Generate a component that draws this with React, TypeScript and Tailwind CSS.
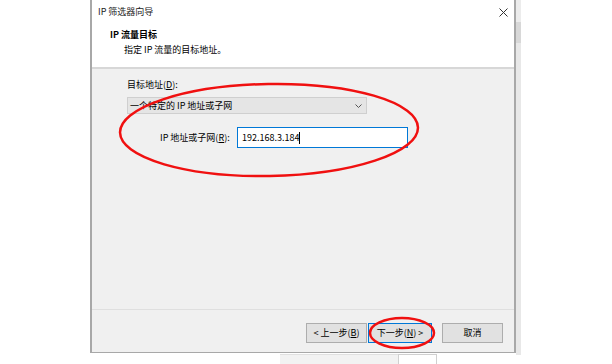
const font = "font-['Microsoft_YaHei','Noto_Sans_CJK_SC','Noto_Sans',sans-serif]";

function Button({ children, primary }: { children: React.ReactNode; primary?: boolean }) {
  return (
    <div
      className={`h-[20px] flex items-center justify-center bg-[#e1e1e1] text-[9px] text-black border ${
        primary ? "border-[#0078d7] w-[64px]" : "border-[#adadad] w-[61px]"
      }`}
    >
      {children}
    </div>
  );
}

export default function App() {
  return (
    <div className={`relative w-[612px] h-[364px] bg-white overflow-hidden flex ${font}`}>
      <div className="w-[90px] shrink-0" />

      <div className="flex flex-col">
        {/* dialog */}
        <div className="w-[426px] h-[354px] flex flex-col border-l-2 border-r-2 border-b border-[#a8a8a8]">
          {/* header */}
          <div className="h-[67px] bg-white pl-[6px] pt-[5px]">
            <div className="h-[14px] flex items-center justify-between pr-[6px]">
              <span className="text-[9px] text-[#222]">IP 筛选器向导</span>
              <svg width="9" height="9" viewBox="0 0 9 9">
                <path d="M0.5 0.5 L8.5 8.5 M8.5 0.5 L0.5 8.5" stroke="#333" strokeWidth="1" />
              </svg>
            </div>
            <div className="mt-[10px] pl-[12px] text-[9px] leading-[12px] font-bold text-black">IP 流量目标</div>
            <div className="mt-[3px] pl-[26px] text-[9px] leading-[12px] text-black">指定 IP 流量的目标地址。</div>
          </div>
          <div className="h-[2px] bg-[#d7d7d7]" />

          {/* body */}
          <div className="flex-1 bg-[#f0f0f0] pl-[35px] pt-[10px]">
            <div className="text-[9px] leading-[12px] text-black">
              目标地址(<u>D</u>):
            </div>
            <div className="mt-[6px] w-[240px] h-[17px] bg-[#e5e5e5] border border-[#cfcfcf] flex items-center justify-between pl-[2px] pr-[4px]">
              <span className="text-[9px] text-black">一个特定的 IP 地址或子网</span>
              <svg width="7" height="4" viewBox="0 0 7 4">
                <path d="M0.5 0.5 L3.5 3.5 L6.5 0.5" stroke="#555" strokeWidth="1" fill="none" />
              </svg>
            </div>
            <div className="mt-[13px] flex items-center">
              <div className="w-[110px] pl-[33px] text-[9px] text-black">
                IP 地址或子网(<u>R</u>):
              </div>
              <div className="w-[171px] h-[21px] bg-white border border-[#0078d7] flex items-center pl-[4px]">
                <span className="text-[9px] text-black">192.168.3.184</span>
                <span className="w-px h-[12px] bg-black" />
              </div>
            </div>
          </div>

          {/* footer */}
          <div className="h-px bg-[#dfdfdf]" />
          <div className="h-[42px] bg-[#f0f0f0] flex justify-end items-start pt-[13px] pr-[11px]">
            <Button>
              &lt; 上一步(<u>B</u>)
            </Button>
            <div className="w-px" />
            <Button primary>
              下一步(<u>N</u>) &gt;
            </Button>
            <div className="w-[10px]" />
            <Button>取消</Button>
          </div>
        </div>
        {/* background window peeking below */}
        <div className="flex h-[10px] mt-px">
          <div className="w-[190px]" />
          <div className="w-[118px] bg-[#f2f2f2] border-t border-[#e0e0e0]" />
          <div className="w-[39px] border-x border-t border-[#d0d0d0] bg-white" />
        </div>
      </div>

      {/* shadow / background on the right */}
      <div className="w-[5px] flex flex-col">
        <div className="h-[22px] bg-[#ececec]" />
        <div className="h-[21px] bg-[#d8d8d8]" />
        <div className="h-[312px] bg-[#e8e8e8]" />
      </div>

      {/* red hand-drawn marks over the dialog */}
      <svg className="absolute inset-0 pointer-events-none" width="612" height="364" viewBox="0 0 612 364">
        <ellipse cx="269" cy="130" rx="149" ry="46" transform="rotate(-1 269 130)" stroke="#f01010" strokeWidth="2.5" fill="none" />
        <ellipse cx="402" cy="333" rx="32" ry="15" stroke="#f01010" strokeWidth="2.5" fill="none" />
      </svg>
    </div>
  );
}
